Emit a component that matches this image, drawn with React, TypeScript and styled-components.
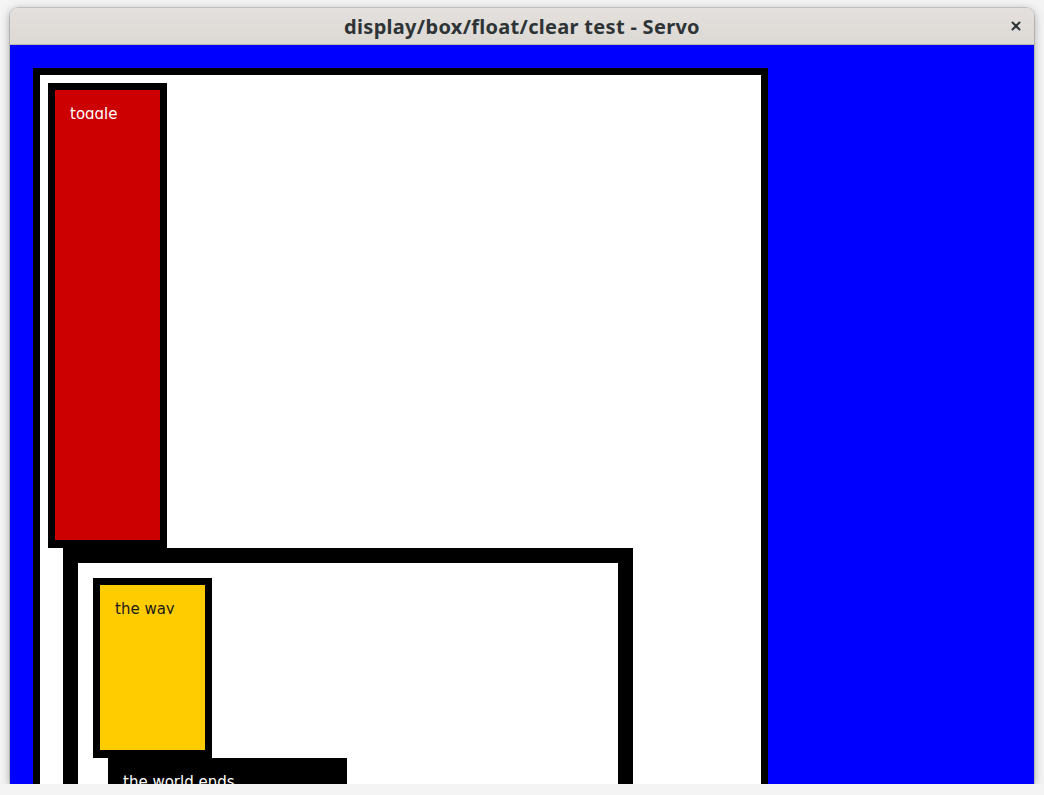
import styled, { createGlobalStyle } from 'styled-components';

const GlobalStyle = createGlobalStyle`
  html, body {
    margin: 0;
    padding: 0;
    background: #f4f4f4;
    overflow: hidden;
  }
`;

const App = () => {
  return (
    <>
      <GlobalStyle />
      <Window>
        <TitleBar>
          <Title>display/box/float/clear test - Servo</Title>
          <CloseButton aria-label="close">
            <svg width="10" height="10" viewBox="0 0 10 10">
              <path d="M1.5 1.5 L8.5 8.5 M8.5 1.5 L1.5 8.5" stroke="#2e3436" strokeWidth="2" strokeLinecap="round" />
            </svg>
          </CloseButton>
        </TitleBar>
        <Viewport>
          <Outer>
            <FloatBox $bg="#cc0000" $fg="#ffffff" $height={465}>
              <Clip>toggle</Clip>
            </FloatBox>
            <Cleared>
              <FloatBox $bg="#ffcc00" $fg="#1a1a1a" $height={180}>
                <Clip>the way</Clip>
              </FloatBox>
              <Ending>
                <Clip>the world ends</Clip>
              </Ending>
            </Cleared>
          </Outer>
        </Viewport>
      </Window>
    </>
  );
};

export default App;

const Window = styled.div`
  margin: 8px 10px 0;
  width: 1024px;
  height: 776px;
  display: flex;
  flex-direction: column;
  border-radius: 8px 8px 0 0;
  overflow: hidden;
  box-shadow: 0 2px 10px rgba(0, 0, 0, 0.35), 0 0 0 1px rgba(0, 0, 0, 0.12);
`;

const TitleBar = styled.div`
  position: relative;
  height: 36px;
  flex-shrink: 0;
  display: flex;
  align-items: center;
  justify-content: center;
  background: linear-gradient(#e3e0dd, #dcd9d5);
  border-bottom: 1px solid #b9b5b0;
`;

const Title = styled.div`
  font-family: 'Noto Sans', 'DejaVu Sans', sans-serif;
  font-weight: 700;
  font-size: 20px;
  color: #2e3436;
  letter-spacing: 0.3px;
  padding-top: 1px;
`;

const CloseButton = styled.div`
  position: absolute;
  right: 13px;
  top: 13px;
  width: 10px;
  height: 10px;
  display: flex;
`;

const Viewport = styled.div`
  flex: 1;
  background: #0000ff;
  overflow: hidden;
  font-family: 'DejaVu Sans', sans-serif;
  font-size: 15px;
  line-height: 16px;
`;

const Outer = styled.div`
  margin: 23px;
  width: 735px;
  height: 900px;
  box-sizing: border-box;
  border: 7px solid #000;
  padding: 8px;
  background: #fff;
`;

const FloatBox = styled.div<{ $bg: string; $fg: string; $height: number }>`
  float: left;
  box-sizing: border-box;
  width: 119px;
  height: ${(p) => p.$height}px;
  border: 7px solid #000;
  border-bottom-width: 8px;
  padding: 16px 15px;
  background: ${(p) => p.$bg};
  color: ${(p) => p.$fg};
`;

const Cleared = styled.div`
  clear: both;
  margin-left: 15px;
  width: 570px;
  height: 600px;
  box-sizing: border-box;
  border: 15px solid #000;
  padding: 15px;
  background: #fff;
`;

const Ending = styled.div`
  clear: both;
  margin-left: 15px;
  width: 239px;
  height: 200px;
  box-sizing: border-box;
  padding: 16px 15px;
  background: #000;
  color: #fff;
`;

// descenders are cut off at the baseline in the reference render
const Clip = styled.span`
  display: inline-block;
  vertical-align: top;
  height: 13px;
  line-height: 16px;
  overflow: hidden;
  white-space: nowrap;
`;
